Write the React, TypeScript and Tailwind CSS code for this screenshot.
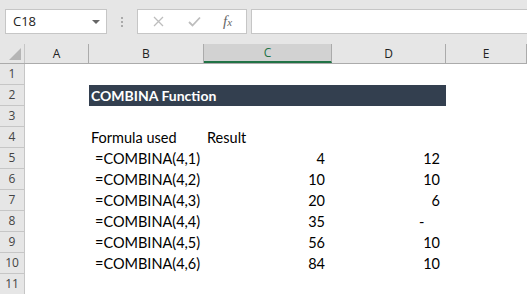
const cols = [
  { key: "A", w: "w-[64px]" },
  { key: "B", w: "w-[115px]" },
  { key: "C", w: "w-[128px]" },
  { key: "D", w: "w-[114px]" },
  { key: "E", w: "w-[81px]" },
];

const rows: { n: number; f?: string; c?: string; d?: string }[] = [
  { n: 5, f: "=COMBINA(4,1)", c: "4", d: "12" },
  { n: 6, f: "=COMBINA(4,2)", c: "10", d: "10" },
  { n: 7, f: "=COMBINA(4,3)", c: "20", d: "6" },
  { n: 8, f: "=COMBINA(4,4)", c: "35", d: "-" },
  { n: 9, f: "=COMBINA(4,5)", c: "56", d: "10" },
  { n: 10, f: "=COMBINA(4,6)", c: "84", d: "10" },
];

const cell = "font-['Lato',sans-serif] text-[14.5px] text-black leading-[21px] h-[21px]";

function RowHead({ n }: { n: number }) {
  return (
    <div className="w-[25px] h-[21px] shrink-0 bg-[#e6e6e6] border-r border-b border-[#c6c6c6] flex items-center justify-center font-['Open_Sans',sans-serif] text-[12px] text-[#444]">
      {n}
    </div>
  );
}

export default function App() {
  return (
    <div className="w-[527px] h-[294px] overflow-hidden bg-white">
      {/* formula bar */}
      <div className="h-[44px] bg-[#e6e6e6] flex items-start pt-[9px] pl-[5px]">
        <div className="w-[102px] h-[25px] bg-white border border-[#c6c6c6] flex items-center justify-between pl-[7px] pr-[6px]">
          <span className="font-['Open_Sans',sans-serif] text-[13px] text-[#222]">C18</span>
          <span className="w-0 h-0 border-l-[4px] border-r-[4px] border-t-[4px] border-l-transparent border-r-transparent border-t-[#666]" />
        </div>
        <div className="w-[30px] h-[25px] flex flex-col items-center justify-center gap-[2px]">
          <span className="w-[2px] h-[2px] bg-[#aaa]" />
          <span className="w-[2px] h-[2px] bg-[#aaa]" />
          <span className="w-[2px] h-[2px] bg-[#aaa]" />
        </div>
        <div className="w-[110px] h-[25px] bg-white border border-[#c6c6c6] flex items-center">
          <svg className="ml-[15px]" width="11" height="11" viewBox="0 0 11 11">
            <path d="M1 1L10 10M10 1L1 10" stroke="#bdbdbd" strokeWidth="1.3" />
          </svg>
          <svg className="ml-[24px]" width="13" height="11" viewBox="0 0 13 11">
            <path d="M1 6L4.5 9.5L12 1.5" stroke="#bdbdbd" strokeWidth="1.8" fill="none" />
          </svg>
          <span className="ml-[22px] font-['Liberation_Serif',serif] italic text-[15px] text-[#666] leading-none">
            f<span className="text-[11px]">x</span>
          </span>
        </div>
        <div className="ml-[4px] flex-1 h-[25px] bg-white border border-[#c6c6c6] border-r-0" />
      </div>

      {/* column headers */}
      <div className="flex h-[20px] bg-[#e6e6e6] border-b border-[#ababab]">
        <div className="w-[25px] h-full shrink-0 flex items-end justify-end pr-[3px] pb-[3px] border-r border-[#c6c6c6]">
          <svg width="12" height="12" viewBox="0 0 12 12">
            <path d="M12 0L12 12L0 12Z" fill="#b5b5b5" />
          </svg>
        </div>
        {cols.map((c) => (
          <div
            key={c.key}
            className={`${c.w} h-full shrink-0 flex items-center justify-center border-r border-[#ababab] font-['Open_Sans',sans-serif] text-[12px] ${
              c.key === "C" ? "bg-[#d2d2d2] text-[#217346] border-b-2 border-b-[#217346] -mb-px" : "text-[#222]"
            }`}
          >
            {c.key}
          </div>
        ))}
      </div>

      {/* rows 1-4 */}
      <div className="flex">
        <RowHead n={1} />
        <div className="flex-1" />
      </div>
      <div className="flex">
        <RowHead n={2} />
        <div className="w-[64px]" />
        <div className="w-[357px] bg-[#333f4f] pl-[2px] h-[21px] font-['Lato',sans-serif] font-bold text-[14px] text-white leading-[21px]">
          COMBINA Function
        </div>
      </div>
      <div className="flex">
        <RowHead n={3} />
        <div className="flex-1" />
      </div>
      <div className="flex">
        <RowHead n={4} />
        <div className="w-[64px]" />
        <div className={`w-[115px] pl-[2px] ${cell}`}>Formula used</div>
        <div className={`w-[128px] pl-[3px] ${cell}`}>Result</div>
      </div>
      {rows.map((r) => (
        <div key={r.n} className="flex">
          <RowHead n={r.n} />
          <div className="w-[64px]" />
          <div className={`w-[115px] pl-[6px] ${cell}`}>{r.f}</div>
          <div className={`w-[128px] pr-[7px] text-right ${cell}`}>{r.c}</div>
          {r.d === "-" ? (
            <div className={`w-[114px] pl-[87px] ${cell}`}>-</div>
          ) : (
            <div className={`w-[114px] pr-[6px] text-right ${cell}`}>{r.d}</div>
          )}
        </div>
      ))}
      <div className="flex">
        <RowHead n={11} />
        <div className="flex-1" />
      </div>
    </div>
  );
}
